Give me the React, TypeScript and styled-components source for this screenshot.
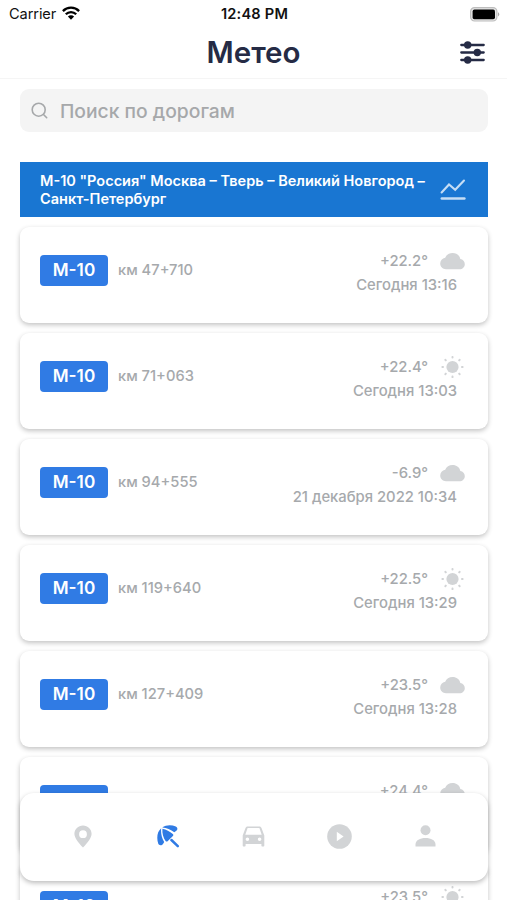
import React from "react";
import styled, { createGlobalStyle } from "styled-components";

const GlobalStyle = createGlobalStyle`
  * { box-sizing: border-box; }
  html, body { margin: 0; background: #fff; }
  body { overflow: hidden; font-family: Inter, "Liberation Sans", sans-serif; }
`;

const Screen = styled.div`
  position: relative;
  width: 507px;
  height: 900px;
  overflow: hidden;
  background: #fff;
  display: flex;
  flex-direction: column;
`;

const StatusBar = styled.div`
  flex: none;
  height: 27px;
  padding: 0 7px 0 9px;
  display: grid;
  grid-template-columns: 1fr auto 1fr;
  align-items: center;
  font-size: 14.6px;
  line-height: 28px;
  color: #111;
`;

const Carrier = styled.span`
  display: flex;
  align-items: center;
  gap: 6px;
  letter-spacing: -0.1px;

  svg {
    margin-bottom: 2px;
  }
`;

const Clock = styled.span`
  font-weight: 600;
  letter-spacing: 0.2px;
`;

const BatterySlot = styled.span`
  display: flex;
  justify-content: flex-end;
`;

const Header = styled.header`
  flex: none;
  height: 52px;
  padding: 0 22px 2px;
  display: grid;
  grid-template-columns: 1fr auto 1fr;
  align-items: center;
  border-bottom: 1px solid #f5f5f5;
`;

const Title = styled.h1`
  grid-column: 2;
  margin: 0;
  font-size: 29.5px;
  line-height: 36px;
  font-weight: 600;
  color: #252b45;
`;

const FilterButton = styled.button`
  justify-self: end;
  display: flex;
  padding: 2px 0 0;
  border: 0;
  background: none;
`;

const SearchField = styled.div`
  flex: none;
  height: 43px;
  margin: 10px 19px 30px 20px;
  padding: 0 11px;
  display: flex;
  align-items: center;
  gap: 11px;
  border-radius: 9px;
  background: #f4f4f4;
  color: #a6a8aa;
  font-size: 19.3px;
  font-weight: 500;
`;

const RoadHeader = styled.div`
  flex: none;
  height: 55px;
  margin: 0 19px 0 20px;
  padding: 0 22px 0 20px;
  display: flex;
  align-items: center;
  justify-content: space-between;
  background: #1976d2;
  color: #fff;
`;

const RoadName = styled.div`
  font-size: 14.52px;
  line-height: 18px;
  font-weight: 600;
  white-space: nowrap;
`;

const Stations = styled.div`
  flex: none;
  padding: 10px 19px 10px 20px;
  display: flex;
  flex-direction: column;
  gap: 10px;
`;

const Card = styled.article`
  height: 96px;
  padding: 22px 23px 0 20px;
  display: flex;
  justify-content: space-between;
  border-radius: 9px;
  background: #fff;
  box-shadow: 0 2px 5px rgba(0, 0, 0, 0.24);
`;

const Place = styled.div`
  height: 31px;
  margin-top: 6px;
  display: flex;
  align-items: center;
  gap: 10px;
`;

const Badge = styled.span`
  width: 68px;
  height: 31px;
  border-radius: 4px;
  background: #307be4;
  color: #fff;
  font-size: 17.2px;
  font-weight: 600;
  line-height: 29px;
  text-align: center;
`;

const Muted = styled.span`
  color: #a6a9ac;
  font-size: 14.8px;
  font-weight: 500;
  line-height: 24px;
  white-space: nowrap;
`;

const Distance = styled(Muted)`
  margin-bottom: 1px;
  font-size: 14.7px;
`;

const Reading = styled.div`
  display: flex;
  flex-direction: column;
`;

const Temperature = styled.div`
  height: 24px;
  display: flex;
  align-items: center;
  justify-content: flex-end;
  gap: 12px;
`;

const Stamp = styled(Muted)`
  padding-right: 8px;
  text-align: right;
`;

const TabBar = styled.nav`
  position: absolute;
  left: 20px;
  right: 19px;
  bottom: 19px;
  height: 88px;
  padding: 0 20px 2px;
  display: grid;
  grid-template-columns: repeat(5, 1fr);
  border-radius: 14px;
  background: #fff;
  box-shadow: 0 2px 5px rgba(0, 0, 0, 0.27);
`;

const Tab = styled.button<{ $active?: boolean }>`
  display: flex;
  align-items: center;
  justify-content: center;
  padding: 0;
  border: 0;
  background: none;
  color: ${(p) => (p.$active ? "#307be4" : "#d2d4d6")};
`;

const WifiIcon = () => (
  <svg width="18" height="14" viewBox="0 0 18 14">
    <g fill="none" stroke="#000" strokeWidth="2.3">
      <path d="M0.9 5.1a11.4 11.4 0 0 1 16.2 0" />
      <path d="M3.8 8.3a7.3 7.3 0 0 1 10.4 0" />
    </g>
    <path d="M5.9 10.6a4.4 4.4 0 0 1 6.2 0L9 13.7z" />
  </svg>
);

const BatteryIcon = () => (
  <svg width="30" height="15" viewBox="0 0 30 15">
    <rect x="0.6" y="0.6" width="26.3" height="13.4" rx="4" fill="#e6e6e6" stroke="#bdbdbd" strokeWidth="1.2" />
    <rect x="2.6" y="2.6" width="22.4" height="9.6" rx="1.8" />
    <path d="M28 5.2a2.4 2.4 0 0 1 0 4.2z" fill="#aaa" />
  </svg>
);

const SlidersIcon = () => (
  <svg width="25" height="23" viewBox="0 0 25 23" fill="#252b45" stroke="#252b45" strokeLinecap="round">
    <path d="M1.3 4h22.4M1.3 11.5h22.4M1.3 19h22.4" strokeWidth="2.3" />
    <g stroke="none">
      <circle cx="7.7" cy="4" r="3.7" />
      <circle cx="17.3" cy="11.5" r="3.7" />
      <circle cx="7.7" cy="19" r="3.7" />
    </g>
  </svg>
);

const SearchIcon = () => (
  <svg width="18" height="18" viewBox="0 0 18 18" fill="none" stroke="#a6a8aa" strokeWidth="1.6" strokeLinecap="round">
    <circle cx="7.7" cy="7.7" r="6.5" />
    <path d="M12.5 12.5l3.2 3.2" />
  </svg>
);

const ChartIcon = () => (
  <svg width="26" height="22" viewBox="0 0 26 22" fill="none" stroke="#c5ddf5" strokeLinecap="round">
    <path d="M1.6 13.5L9 5.5l6.2 5.2L24 1.5" strokeWidth="2.1" />
    <path d="M1.8 19.6h22.6" strokeWidth="2.5" />
  </svg>
);

const CloudIcon = () => (
  <svg width="25" height="24" viewBox="0 0 25 24" fill="#d2d4d6">
    <path d="M20.3 10C19.8 6.4 16.5 4 12.6 4 9.1 4 6.3 5.9 5.2 8.8 2.2 9.3.2 11.6.2 14.5c0 3.2 2.5 5.7 5.8 5.7h13.5c3 0 5.3-2.1 5.3-5 0-2.7-1.9-4.8-4.5-5.2z" />
  </svg>
);

const SunIcon = () => (
  <svg width="25" height="24" viewBox="0 0 25 24" fill="#d2d4d6">
    <circle cx="12.5" cy="12" r="6.1" />
    {[0, 45, 90, 135, 180, 225, 270, 315].map((a) => (
      <rect key={a} x="11.5" y="0.9" width="2" height="2.6" rx="0.9" transform={`rotate(${a} 12.5 12)`} />
    ))}
  </svg>
);

const PinIcon = () => (
  <svg width="18" height="23" viewBox="0 0 18 23" fill="currentColor">
    <path
      fillRule="evenodd"
      d="M9 .4C4.2.4.4 4.1.4 8.8c0 3.9 3.7 8.8 8.6 13.8 4.9-5 8.6-9.9 8.6-13.8C17.6 4.1 13.8.4 9 .4zM9 13.1a3.9 3.9 0 1 1 0-7.8 3.9 3.9 0 0 1 0 7.8z"
    />
  </svg>
);

const UmbrellaIcon = () => (
  <svg width="23" height="23" viewBox="0 0 23 23" fill="currentColor">
    <path d="M4.2 3.3C.2 6.7-.6 12.5 1.2 18.5c.6 2.1 3.6 2.3 4.8.4l1.2-1.8C4.8 13 3.6 8 4.2 3.3z" />
    <path d="M5.4 3.7c-.4 4.9 1 9.3 3.2 12.3.5.7 1.4.8 2 .2l5.3-5.3c.6-.6.6-1.4-.1-1.9C12.8 6.5 9.2 4.5 5.4 3.7z" />
    <path d="M5.2 2.5c3.9-2.9 9.3-2.9 13.6-1.1 2 .8 2.1 3.5.2 4.6L17.3 7.3C13.9 4.6 9.6 2.8 5.2 2.5z" />
    <path d="M14.4 15l6.4 6.1" stroke="currentColor" strokeWidth="2.5" strokeLinecap="round" />
  </svg>
);

const CarIcon = () => (
  <svg width="23" height="21" viewBox="0 0 23 21" fill="currentColor">
    <path
      fillRule="evenodd"
      d="M5.6.5h11.8c1 0 1.8.6 2.1 1.5l2.8 7.5v10c0 .6-.4 1-1 1h-.9c-.6 0-1-.4-1-1v-1.6H3.6v1.6c0 .6-.4 1-1 1h-.9c-.6 0-1-.4-1-1v-10L3.5 2C3.8 1.1 4.6.5 5.6.5zM5.6 2.1L3.3 8.7h16.4l-2.3-6.6zM5.4 11.4a1.8 1.8 0 1 0 0 3.6 1.8 1.8 0 0 0 0-3.6zM17.6 11.4a1.8 1.8 0 1 0 0 3.6 1.8 1.8 0 0 0 0-3.6z"
    />
  </svg>
);

const PlayIcon = () => (
  <svg width="25" height="25" viewBox="0 0 25 25" fill="currentColor">
    <circle cx="12.5" cy="12.5" r="12.3" />
    <path d="M9.8 7.7l6.8 4.8-6.8 4.8z" fill="#fff" />
  </svg>
);

const PersonIcon = () => (
  <svg width="21" height="22" viewBox="0 0 21 22" fill="currentColor">
    <circle cx="10.5" cy="5.3" r="5" />
    <path d="M.5 21.5v-2.1c0-4 4.5-6.3 10-6.3s10 2.3 10 6.3v2.1z" />
  </svg>
);

type Weather = "cloud" | "sun";

const stations: { km: string; temp: string; time: string; weather: Weather }[] = [
  { km: "47+710", temp: "+22.2°", time: "Сегодня 13:16", weather: "cloud" },
  { km: "71+063", temp: "+22.4°", time: "Сегодня 13:03", weather: "sun" },
  { km: "94+555", temp: "-6.9°", time: "21 декабря 2022 10:34", weather: "cloud" },
  { km: "119+640", temp: "+22.5°", time: "Сегодня 13:29", weather: "sun" },
  { km: "127+409", temp: "+23.5°", time: "Сегодня 13:28", weather: "cloud" },
  { km: "150+500", temp: "+24.4°", time: "Сегодня 13:28", weather: "cloud" },
  { km: "160+150", temp: "+23.5°", time: "Сегодня 13:28", weather: "sun" },
];

export default function App() {
  return (
    <Screen>
      <GlobalStyle />
      <StatusBar>
        <Carrier>
          Carrier <WifiIcon />
        </Carrier>
        <Clock>12:48 PM</Clock>
        <BatterySlot>
          <BatteryIcon />
        </BatterySlot>
      </StatusBar>
      <Header>
        <Title>Метео</Title>
        <FilterButton aria-label="Фильтры">
          <SlidersIcon />
        </FilterButton>
      </Header>
      <SearchField>
        <SearchIcon />
        <span>Поиск по дорогам</span>
      </SearchField>
      <RoadHeader>
        <RoadName>
          М-10 "Россия" Москва – Тверь – Великий Новгород –
          <br />
          Санкт-Петербург
        </RoadName>
        <ChartIcon />
      </RoadHeader>
      <Stations>
        {stations.map((s) => (
          <Card key={s.km}>
            <Place>
              <Badge>М-10</Badge>
              <Distance>км {s.km}</Distance>
            </Place>
            <Reading>
              <Temperature>
                <Muted>{s.temp}</Muted>
                {s.weather === "cloud" ? <CloudIcon /> : <SunIcon />}
              </Temperature>
              <Stamp>{s.time}</Stamp>
            </Reading>
          </Card>
        ))}
      </Stations>
      <TabBar>
        <Tab aria-label="Карта"><PinIcon /></Tab>
        <Tab aria-label="Метео" $active><UmbrellaIcon /></Tab>
        <Tab aria-label="Авто"><CarIcon /></Tab>
        <Tab aria-label="Видео"><PlayIcon /></Tab>
        <Tab aria-label="Профиль"><PersonIcon /></Tab>
      </TabBar>
    </Screen>
  );
}
